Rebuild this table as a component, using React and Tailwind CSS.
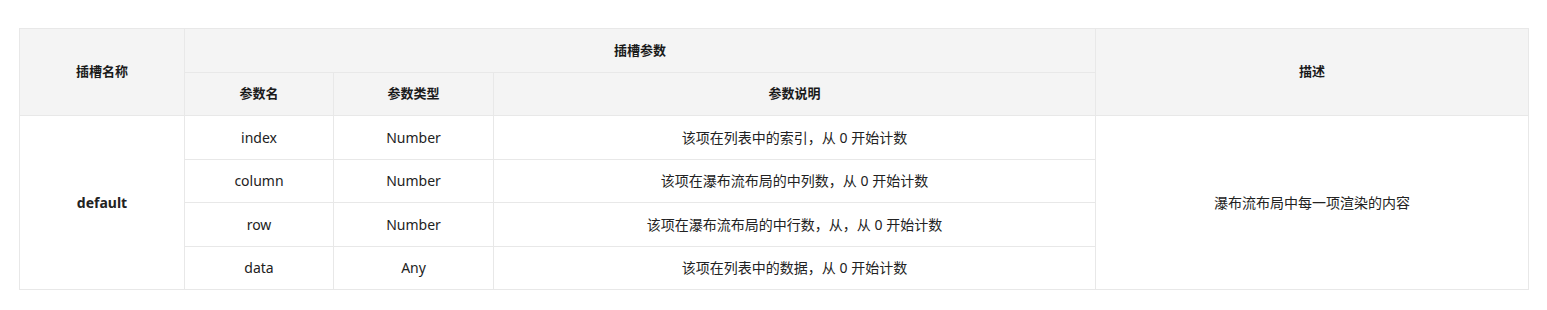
import React from "react";

const rows = [
  { name: "index", type: "Number", desc: "该项在列表中的索引，从 0 开始计数" },
  { name: "column", type: "Number", desc: "该项在瀑布流布局的中列数，从 0 开始计数" },
  { name: "row", type: "Number", desc: "该项在瀑布流布局的中行数，从，从 0 开始计数" },
  { name: "data", type: "Any", desc: "该项在列表中的数据，从 0 开始计数" },
];

const th = "border border-[#e8e8e8] bg-[#f4f4f4] font-bold text-[13px] text-[#1a1a1a] text-center";
const td = "border border-[#e8e8e8] text-[14px] text-[#222] text-center";

export default function App() {
  return (
    <div className="w-[1547px] h-[310px] bg-white pt-[28px] pl-[19px] font-['Noto_Sans','Noto_Sans_CJK_SC',sans-serif]">
      <table className="border-collapse table-fixed w-[1509px]">
        <colgroup>
          <col className="w-[165px]" />
          <col className="w-[149px]" />
          <col className="w-[160px]" />
          <col className="w-[602px]" />
          <col className="w-[433px]" />
        </colgroup>
        <thead>
          <tr className="h-[44px]">
            <th rowSpan={2} className={th}>插槽名称</th>
            <th colSpan={3} className={th}>插槽参数</th>
            <th rowSpan={2} className={th}>描述</th>
          </tr>
          <tr className="h-[43px]">
            <th className={th}>参数名</th>
            <th className={th}>参数类型</th>
            <th className={th}>参数说明</th>
          </tr>
        </thead>
        <tbody>
          {rows.map((r, i) => (
            <tr key={r.name} className="h-[43.5px]">
              {i === 0 && (
                <td rowSpan={4} className={td + " font-bold"}>default</td>
              )}
              <td className={td}>{r.name}</td>
              <td className={td}>{r.type}</td>
              <td className={td + " text-[13px]"}>{r.desc}</td>
              {i === 0 && (
                <td rowSpan={4} className={td + " text-[13px]"}>瀑布流布局中每一项渲染的内容</td>
              )}
            </tr>
          ))}
        </tbody>
      </table>
    </div>
  );
}
